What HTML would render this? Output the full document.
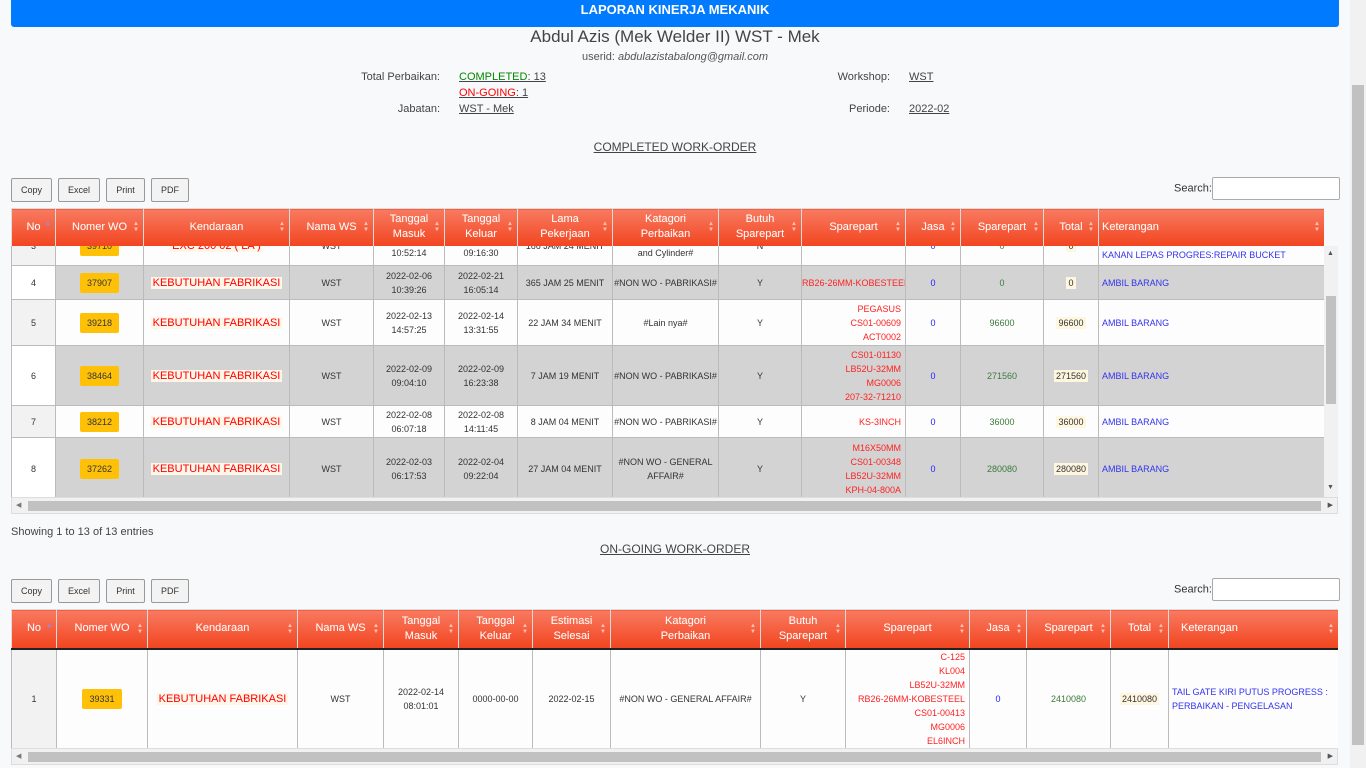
<!DOCTYPE html>
<html><head><meta charset="utf-8"><style>
*{box-sizing:border-box;margin:0;padding:0}
body{width:1366px;height:768px;overflow:hidden;background:#f8f9fa;font-family:"Liberation Sans",sans-serif;color:#333;position:relative}
.abs{position:absolute}
.topbar{left:11px;top:0;width:1328px;height:27px;background:#007bff;color:#fff;font-weight:bold;font-size:13px;text-align:center;line-height:20px;border-radius:0 0 3px 3px}
.vs{left:1350px;top:0;width:16px;height:768px;background:#f1f1f1}
.vs div{position:absolute;left:2px;top:85px;width:12px;height:660px;background:#c1c1c1}
.btn{height:24px;border:1px solid #999;background:#f3f3f3;font-size:9px;text-align:center;line-height:22px;border-radius:2px;color:#333}
.search{font-size:11px;color:#333}
.search span{display:inline-block;width:128px;height:23px;border:1px solid #aaa;background:#fff;vertical-align:middle;border-radius:2px}
table{border-collapse:collapse;table-layout:fixed}
th{background:linear-gradient(#f87a60,#f2441f);color:#fff;font-weight:normal;font-size:11px;border:1px solid #ddd;border-bottom:2px solid #222;position:relative;line-height:15px;text-shadow:0 0 1px #fff3}
th i{position:absolute;right:4px;top:50%;margin-top:-6px;font-style:normal;font-size:6px;line-height:6px;color:#ffc1b0}
td{border:1px solid #bbb;font-size:9px;text-align:center;line-height:14px;color:#333;overflow:hidden;white-space:nowrap}
.g td{background:#d3d3d3}
.w td{background:#fdfdfd}
td.no{background:#f2f2f2}
.g td.no{background:#fff}
.wo{display:inline-block;background:#ffc107;padding:3px 7px;border-radius:2px;color:#333;font-size:9px}
.kb{color:#f00;font-size:11px;background:#fff6ea;padding:0 2px}
.sp{color:#f22;text-align:right;padding-right:4px}
.j{color:#22f}
.s{color:#3a7a3a}
.t span{background:#fff6e0;padding:1px 2px}
.k{color:#33e;text-align:left;padding-left:3px}
.hs{height:17px;background:#f1f1f1;border:1px solid #ddd}
.hs b{position:absolute;left:16px;right:16px;top:3px;height:10px;background:#c1c1c1}
</style></head><body>
<div class="abs topbar">LAPORAN KINERJA MEKANIK</div>
<div class="abs vs"><div></div></div>
<div class="abs" style="left:0;width:1350px;top:27px;text-align:center;font-size:17px;color:#444">Abdul Azis (Mek Welder II) WST - Mek</div>
<div class="abs" style="left:0;width:1350px;top:51px;text-align:center;font-size:11px;color:#555">userid: <i>abdulazistabalong@gmail.com</i></div>
<div class="abs" style="left:340px;width:100px;top:71px;text-align:right;font-size:11px;color:#444">Total Perbaikan:</div>
<div class="abs" style="left:459px;top:71px;font-size:11px;text-decoration:underline;color:#444"><span style="color:#080">COMPLETED</span>: 13</div>
<div class="abs" style="left:459px;top:87px;font-size:11px;text-decoration:underline;color:#444"><span style="color:#f00">ON-GOING</span>: 1</div>
<div class="abs" style="left:340px;width:100px;top:103px;text-align:right;font-size:11px;color:#444">Jabatan:</div>
<div class="abs" style="left:459px;top:103px;font-size:11px;text-decoration:underline;color:#444">WST - Mek</div>
<div class="abs" style="left:790px;width:100px;top:71px;text-align:right;font-size:11px;color:#444">Workshop:</div>
<div class="abs" style="left:909px;top:71px;font-size:11px;text-decoration:underline;color:#444">WST</div>
<div class="abs" style="left:790px;width:100px;top:103px;text-align:right;font-size:11px;color:#444">Periode:</div>
<div class="abs" style="left:909px;top:103px;font-size:11px;text-decoration:underline;color:#444">2022-02</div>
<div class="abs" style="left:0;width:1350px;top:140px;text-align:center;font-size:12px;text-decoration:underline;color:#444">COMPLETED WORK-ORDER</div>

<div class="abs btn" style="left:11px;top:178px;width:41px">Copy</div>
<div class="abs btn" style="left:58px;top:178px;width:42px">Excel</div>
<div class="abs btn" style="left:106px;top:178px;width:39px">Print</div>
<div class="abs btn" style="left:151px;top:178px;width:38px">PDF</div>
<div class="abs search" style="left:1174px;top:177px">Search:<span></span></div>

<div class="abs" style="left:11px;top:208px;width:1313px;height:38px;overflow:hidden">
<table style="width:1313px"><colgroup><col style="width:44px"><col style="width:88px"><col style="width:146px"><col style="width:84px"><col style="width:71px"><col style="width:73px"><col style="width:95px"><col style="width:106px"><col style="width:83px"><col style="width:104px"><col style="width:55px"><col style="width:83px"><col style="width:55px"><col style="width:226px"></colgroup>
<tr style="height:38px"><th>No<i style="color:#88f">▲</i></th><th>Nomer WO<i>▲<br>▼</i></th><th>Kendaraan<i>▲<br>▼</i></th><th>Nama WS<i>▲<br>▼</i></th><th>Tanggal<br>Masuk<i>▲<br>▼</i></th><th>Tanggal<br>Keluar<i>▲<br>▼</i></th><th>Lama<br>Pekerjaan<i>▲<br>▼</i></th><th>Katagori<br>Perbaikan<i>▲<br>▼</i></th><th>Butuh<br>Sparepart<i>▲<br>▼</i></th><th>Sparepart<i>▲<br>▼</i></th><th>Jasa<i>▲<br>▼</i></th><th>Sparepart<i>▲<br>▼</i></th><th>Total<i>▲<br>▼</i></th><th style="text-align:left;padding-left:3px">Keterangan<i>▲<br>▼</i></th></tr></table></div>

<div class="abs" style="left:11px;top:246px;width:1313px;height:251px;overflow:hidden;background:#fff">
<table style="width:1313px;margin-top:-21px"><colgroup><col style="width:44px"><col style="width:88px"><col style="width:146px"><col style="width:84px"><col style="width:71px"><col style="width:73px"><col style="width:95px"><col style="width:106px"><col style="width:83px"><col style="width:104px"><col style="width:55px"><col style="width:83px"><col style="width:55px"><col style="width:226px"></colgroup>
<tr class="w" style="height:40px"><td class="no">3</td><td><span class="wo">39710</span></td><td><span class="kb">EXC 200 02 ( LA )</span></td><td>WST</td><td>2022-02-05<br>10:52:14</td><td>2022-02-12<br>09:16:30</td><td>166 JAM 24 MENIT</td><td>#Repair<br>and Cylinder#</td><td>N</td><td class="sp"></td><td class="j">0</td><td class="s">0</td><td class="t"><span>0</span></td><td class="k" style="vertical-align:bottom;padding-bottom:3px">KANAN LEPAS PROGRES:REPAIR BUCKET</td></tr>
<tr class="g" style="height:34px"><td class="no">4</td><td><span class="wo">37907</span></td><td><span class="kb">KEBUTUHAN FABRIKASI</span></td><td>WST</td><td>2022-02-06<br>10:39:26</td><td>2022-02-21<br>16:05:14</td><td>365 JAM 25 MENIT</td><td>#NON WO - PABRIKASI#</td><td>Y</td><td class="sp">RB26-26MM-KOBESTEEL</td><td class="j">0</td><td class="s">0</td><td class="t"><span>0</span></td><td class="k">AMBIL BARANG</td></tr>
<tr class="w" style="height:46px"><td class="no">5</td><td><span class="wo">39218</span></td><td><span class="kb">KEBUTUHAN FABRIKASI</span></td><td>WST</td><td>2022-02-13<br>14:57:25</td><td>2022-02-14<br>13:31:55</td><td>22 JAM 34 MENIT</td><td>#Lain nya#</td><td>Y</td><td class="sp">PEGASUS<br>CS01-00609<br>ACT0002</td><td class="j">0</td><td class="s">96600</td><td class="t"><span>96600</span></td><td class="k">AMBIL BARANG</td></tr>
<tr class="g" style="height:60px"><td class="no">6</td><td><span class="wo">38464</span></td><td><span class="kb">KEBUTUHAN FABRIKASI</span></td><td>WST</td><td>2022-02-09<br>09:04:10</td><td>2022-02-09<br>16:23:38</td><td>7 JAM 19 MENIT</td><td>#NON WO - PABRIKASI#</td><td>Y</td><td class="sp">CS01-01130<br>LB52U-32MM<br>MG0006<br>207-32-71210</td><td class="j">0</td><td class="s">271560</td><td class="t"><span>271560</span></td><td class="k">AMBIL BARANG</td></tr>
<tr class="w" style="height:32px"><td class="no">7</td><td><span class="wo">38212</span></td><td><span class="kb">KEBUTUHAN FABRIKASI</span></td><td>WST</td><td>2022-02-08<br>06:07:18</td><td>2022-02-08<br>14:11:45</td><td>8 JAM 04 MENIT</td><td>#NON WO - PABRIKASI#</td><td>Y</td><td class="sp">KS-3INCH</td><td class="j">0</td><td class="s">36000</td><td class="t"><span>36000</span></td><td class="k">AMBIL BARANG</td></tr>
<tr class="g" style="height:62px"><td class="no">8</td><td><span class="wo">37262</span></td><td><span class="kb">KEBUTUHAN FABRIKASI</span></td><td>WST</td><td>2022-02-03<br>06:17:53</td><td>2022-02-04<br>09:22:04</td><td>27 JAM 04 MENIT</td><td>#NON WO - GENERAL<br>AFFAIR#</td><td>Y</td><td class="sp">M16X50MM<br>CS01-00348<br>LB52U-32MM<br>KPH-04-800A</td><td class="j">0</td><td class="s">280080</td><td class="t"><span>280080</span></td><td class="k">AMBIL BARANG</td></tr>
</table></div>
<div class="abs" style="left:1324px;top:246px;width:14px;height:251px;background:#f1f1f1"><div class="abs" style="left:2px;top:50px;width:10px;height:108px;background:#c1c1c1"></div><div class="abs" style="left:3px;top:4px;font-size:7px;color:#555">▲</div><div class="abs" style="left:3px;top:238px;font-size:7px;color:#555">▼</div></div>
<div class="abs hs" style="left:11px;top:497px;width:1327px"><b></b><span class="abs" style="left:4px;top:3px;font-size:7px;color:#777">◀</span><span class="abs" style="right:4px;top:3px;font-size:7px;color:#555">▶</span></div>

<div class="abs" style="left:11px;top:526px;font-size:11px;color:#444">Showing 1 to 13 of 13 entries</div>
<div class="abs" style="left:0;width:1350px;top:542px;text-align:center;font-size:12px;text-decoration:underline;color:#444">ON-GOING WORK-ORDER</div>

<div class="abs btn" style="left:11px;top:579px;width:41px">Copy</div>
<div class="abs btn" style="left:58px;top:579px;width:42px">Excel</div>
<div class="abs btn" style="left:106px;top:579px;width:39px">Print</div>
<div class="abs btn" style="left:151px;top:579px;width:38px">PDF</div>
<div class="abs search" style="left:1174px;top:578px">Search:<span></span></div>

<div class="abs" style="left:11px;top:609px;width:1327px;height:139px;overflow:hidden;background:#fff">
<table style="width:1327px"><colgroup><col style="width:45px"><col style="width:91px"><col style="width:150px"><col style="width:86px"><col style="width:75px"><col style="width:74px"><col style="width:78px"><col style="width:150px"><col style="width:85px"><col style="width:124px"><col style="width:57px"><col style="width:84px"><col style="width:58px"><col style="width:170px"></colgroup>
<tr style="height:39px"><th>No<i style="color:#88f">▲</i></th><th>Nomer WO<i>▲<br>▼</i></th><th>Kendaraan<i>▲<br>▼</i></th><th>Nama WS<i>▲<br>▼</i></th><th>Tanggal<br>Masuk<i>▲<br>▼</i></th><th>Tanggal<br>Keluar<i>▲<br>▼</i></th><th>Estimasi<br>Selesai<i>▲<br>▼</i></th><th>Katagori<br>Perbaikan<i>▲<br>▼</i></th><th>Butuh<br>Sparepart<i>▲<br>▼</i></th><th>Sparepart<i>▲<br>▼</i></th><th>Jasa<i>▲<br>▼</i></th><th>Sparepart<i>▲<br>▼</i></th><th>Total<i>▲<br>▼</i></th><th style="text-align:left;padding-left:12px">Keterangan<i>▲<br>▼</i></th></tr>
<tr class="w" style="height:99px"><td class="no">1</td><td><span class="wo">39331</span></td><td><span class="kb">KEBUTUHAN FABRIKASI</span></td><td>WST</td><td>2022-02-14<br>08:01:01</td><td>0000-00-00</td><td>2022-02-15</td><td>#NON WO - GENERAL AFFAIR#</td><td>Y</td><td class="sp">C-125<br>KL004<br>LB52U-32MM<br>RB26-26MM-KOBESTEEL<br>CS01-00413<br>MG0006<br>EL6INCH</td><td class="j">0</td><td class="s">2410080</td><td class="t"><span>2410080</span></td><td class="k">TAIL GATE KIRI PUTUS PROGRESS :<br>PERBAIKAN - PENGELASAN</td></tr>
</table></div>
<div class="abs hs" style="left:11px;top:748px;width:1327px"><b></b><span class="abs" style="left:4px;top:3px;font-size:7px;color:#777">◀</span><span class="abs" style="right:4px;top:3px;font-size:7px;color:#555">▶</span></div>
</body></html>
